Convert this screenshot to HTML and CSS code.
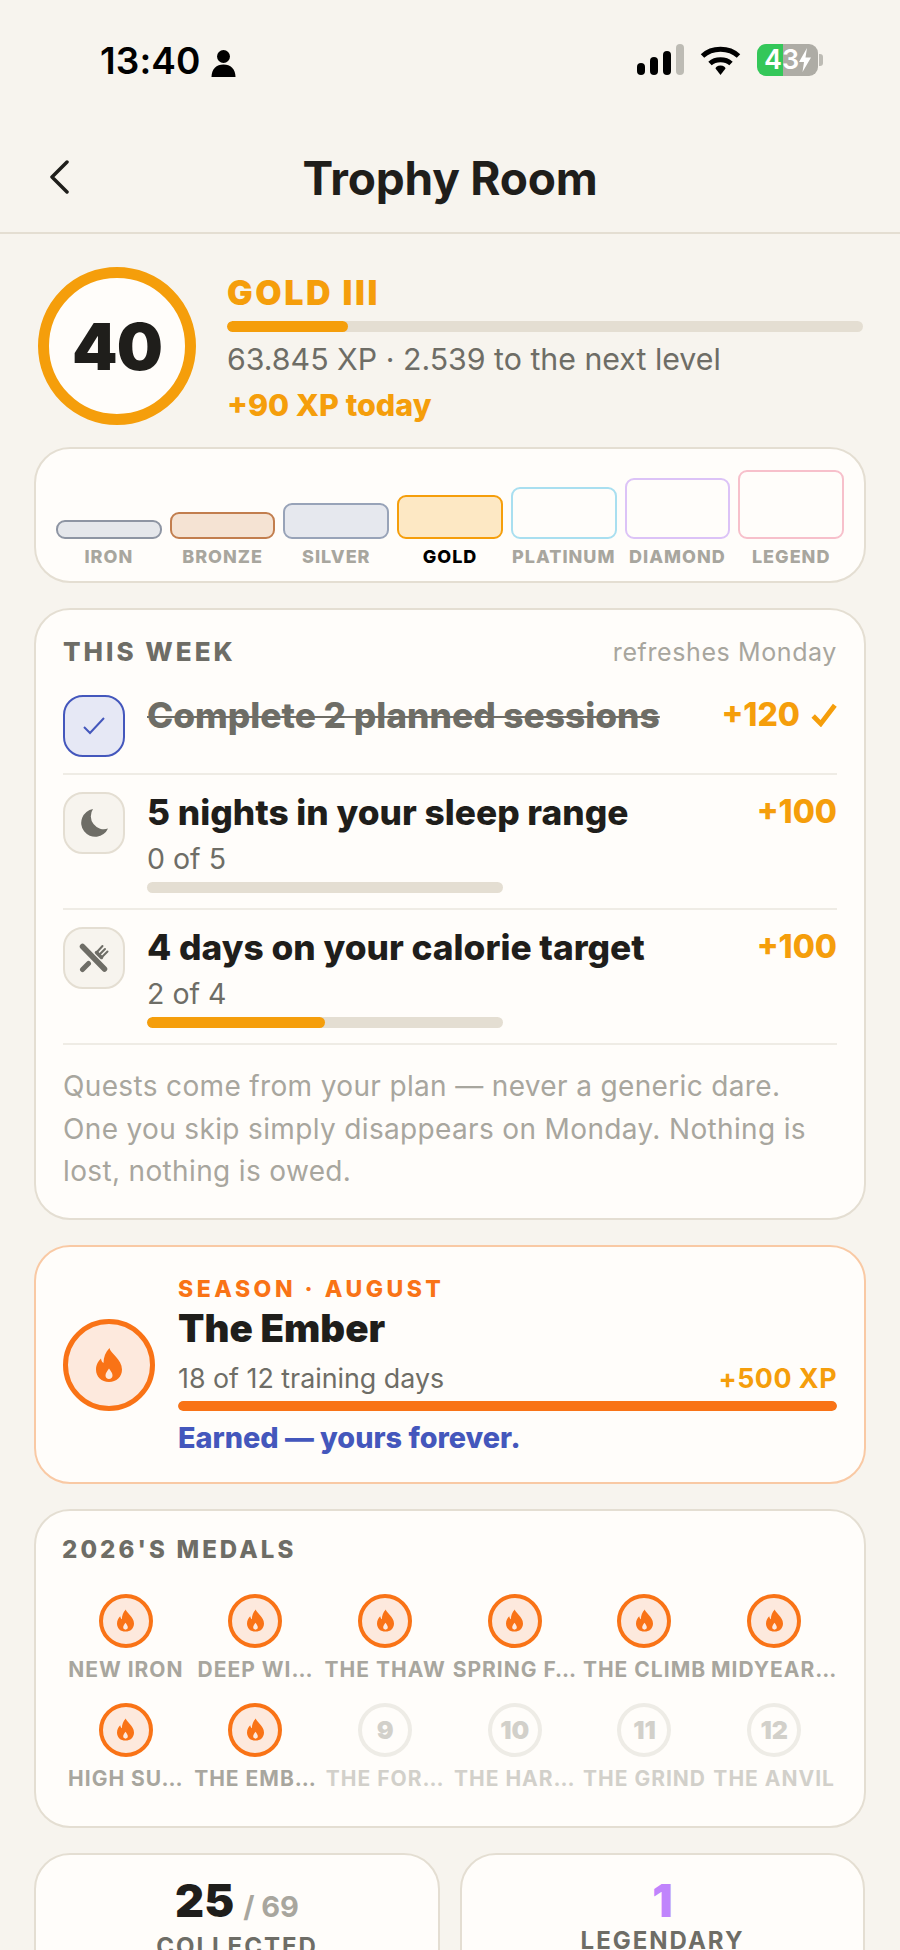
FILE: index.html
```html
<!DOCTYPE html>
<html lang="en">
<head>
    <meta charset="UTF-8">
    <meta name="viewport" content="width=device-width, initial-scale=1.0">
    <title>Trophy Room</title>
    <link rel="stylesheet" href="styles.css">
</head>
<body>
    <svg class="defs" width="0" height="0" aria-hidden="true">
        <symbol id="flame" viewBox="0 0 26 34">
            <path fill-rule="evenodd" d="M13.5 0C14 5 26 11 26 21.5C26 29 20.5 34 13 34C5.5 34 0 29 0 21.5C0 16.5 2.5 13 5 10.5C5.3 12.5 6 14 7.5 15C7.5 9 9.5 4 13.5 0ZM13 20.5C11 23.500 9.500 25 9.500 27.500C9.500 29.500 11 31 13 31C15 31 16.500 29.500 16.500 27.500C16.500 25 15 23.500 13 20.500Z"/>
        </symbol>
    </svg>

    <div class="phone">
        <div class="status">
            <div class="status-left">
                <span class="time">13:40</span>
                <svg class="person" viewBox="0 0 24 28" width="25" height="28"><circle cx="12" cy="7.500" r="6.500"/><path d="M0 28C0 20 5 15.500 12 15.500S24 20 24 28Z"/></svg>
            </div>
            <div class="status-right">
                <div class="signal">
                    <span class="sig sig-1"></span>
                    <span class="sig sig-2"></span>
                    <span class="sig sig-3"></span>
                    <span class="sig sig-4"></span>
                </div>
                <svg class="wifi" viewBox="0 0 41 31" width="41" height="31" fill="none" stroke="#000">
                    <path stroke-width="5" d="M2.500 12C12 3 29 3 38.500 12"/>
                    <path stroke-width="5" d="M10 19.500C15.500 14.500 25.500 14.500 31 19.500"/>
                    <path fill="#000" stroke="none" d="M20.500 21.500C23.500 21.500 25.500 23 25.500 24.500L20.500 31L15.500 24.500C15.500 23 17.500 21.500 20.500 21.500Z"/>
                </svg>
                <div class="battery">
                    <div class="battery-body">
                        <span class="battery-level">43</span>
                        <svg class="bolt" viewBox="0 0 12 24" width="12" height="24"><path fill="#fff" d="M8 0L0 14H5L3.500 24L12 9.500H6.500Z"/></svg>
                    </div>
                    <span class="battery-nub"></span>
                </div>
            </div>
        </div>

        <div class="nav">
            <svg class="back" viewBox="0 0 20 34" width="20" height="34" fill="none" stroke="#1f1e1b" stroke-width="3.500" stroke-linecap="round" stroke-linejoin="round"><path d="M18 2L3 17L18 32"/></svg>
            <h1>Trophy Room</h1>
        </div>

        <div class="content">
            <div class="level">
                <div class="level-ring">40</div>
                <div class="level-info">
                    <div class="level-rank">GOLD III</div>
                    <div class="bar level-bar"><div class="bar-fill" style="width: 19%"></div></div>
                    <div class="level-xp">63.845 XP · 2.539 to the next level</div>
                    <div class="level-today">+90 XP today</div>
                </div>
            </div>

            <div class="card tiers">
                <div class="tier">
                    <div class="tier-block tier-iron"></div>
                    <span class="tier-name">IRON</span>
                </div>
                <div class="tier">
                    <div class="tier-block tier-bronze"></div>
                    <span class="tier-name">BRONZE</span>
                </div>
                <div class="tier">
                    <div class="tier-block tier-silver"></div>
                    <span class="tier-name">SILVER</span>
                </div>
                <div class="tier">
                    <div class="tier-block tier-gold"></div>
                    <span class="tier-name current">GOLD</span>
                </div>
                <div class="tier">
                    <div class="tier-block tier-platinum"></div>
                    <span class="tier-name">PLATINUM</span>
                </div>
                <div class="tier">
                    <div class="tier-block tier-diamond"></div>
                    <span class="tier-name">DIAMOND</span>
                </div>
                <div class="tier">
                    <div class="tier-block tier-legend"></div>
                    <span class="tier-name">LEGEND</span>
                </div>
            </div>

            <div class="card quests">
                <div class="quests-head">
                    <span class="section-title">THIS WEEK</span>
                    <span class="quests-refresh">refreshes Monday</span>
                </div>

                <div class="quest">
                    <div class="quest-icon done">
                        <svg viewBox="0 0 22 18" width="22" height="18" fill="none" stroke="#4457bc" stroke-width="2"><path d="M1 10L7 16L21 1"/></svg>
                    </div>
                    <div class="quest-body">
                        <div class="quest-title struck">Complete 2 planned sessions</div>
                    </div>
                    <div class="quest-xp">+120
                        <svg viewBox="0 0 24 22" width="26" height="24" fill="none" stroke="#f59e0b" stroke-width="4.500"><path d="M2 12L9 19L22 2"/></svg>
                    </div>
                </div>

                <div class="quest">
                    <div class="quest-icon">
                        <svg viewBox="0 0 28 28" width="28" height="28"><path fill="#6e6d66" d="M13 0A14 14 0 1 0 28 19.500A13 13 0 0 1 13 0Z"/></svg>
                    </div>
                    <div class="quest-body">
                        <div class="quest-title">5 nights in your sleep range</div>
                        <div class="quest-sub">0 of 5</div>
                        <div class="bar quest-bar"><div class="bar-fill" style="width: 0%"></div></div>
                    </div>
                    <div class="quest-xp">+100</div>
                </div>

                <div class="quest">
                    <div class="quest-icon">
                        <svg viewBox="0 0 30 30" width="30" height="30" fill="none" stroke="#6e6d66" stroke-linecap="round">
                            <path stroke-width="5.500" d="M3.500 3.500L25.500 26"/>
                            <path stroke-width="5" d="M3.500 26.500L9.500 20.500"/>
                            <path stroke-width="2" d="M18 9L23.500 3M20.500 11.500L26 6M23 14L28.500 8.500"/>
                            <path stroke-width="3.500" d="M17.500 9.500L22.500 14.500"/>
                        </svg>
                    </div>
                    <div class="quest-body">
                        <div class="quest-title">4 days on your calorie target</div>
                        <div class="quest-sub">2 of 4</div>
                        <div class="bar quest-bar"><div class="bar-fill" style="width: 50%"></div></div>
                    </div>
                    <div class="quest-xp">+100</div>
                </div>

                <p class="quests-note">Quests come from your plan — never a generic dare. One you skip simply disappears on Monday. Nothing is lost, nothing is owed.</p>
            </div>

            <div class="card season">
                <div class="season-medal">
                    <svg width="26" height="34"><use href="#flame"/></svg>
                </div>
                <div class="season-info">
                    <div class="season-label">SEASON · AUGUST</div>
                    <div class="season-name">The Ember</div>
                    <div class="season-meta">
                        <span>18 of 12 training days</span>
                        <span class="season-xp">+500 XP</span>
                    </div>
                    <div class="bar season-bar"><div class="bar-fill" style="width: 100%"></div></div>
                    <div class="season-earned">Earned — yours forever.</div>
                </div>
            </div>

            <div class="card medals">
                <div class="section-title medals-title">2026'S MEDALS</div>
                <div class="medal-grid">
                    <div class="medal"><div class="medal-circle"><svg width="17" height="23"><use href="#flame"/></svg></div><span class="medal-name">NEW IRON</span></div>
                    <div class="medal"><div class="medal-circle"><svg width="17" height="23"><use href="#flame"/></svg></div><span class="medal-name">DEEP WI…</span></div>
                    <div class="medal"><div class="medal-circle"><svg width="17" height="23"><use href="#flame"/></svg></div><span class="medal-name">THE THAW</span></div>
                    <div class="medal"><div class="medal-circle"><svg width="17" height="23"><use href="#flame"/></svg></div><span class="medal-name">SPRING F…</span></div>
                    <div class="medal"><div class="medal-circle"><svg width="17" height="23"><use href="#flame"/></svg></div><span class="medal-name">THE CLIMB</span></div>
                    <div class="medal"><div class="medal-circle"><svg width="17" height="23"><use href="#flame"/></svg></div><span class="medal-name">MIDYEAR…</span></div>
                    <div class="medal"><div class="medal-circle"><svg width="17" height="23"><use href="#flame"/></svg></div><span class="medal-name">HIGH SU…</span></div>
                    <div class="medal"><div class="medal-circle"><svg width="17" height="23"><use href="#flame"/></svg></div><span class="medal-name">THE EMB…</span></div>
                    <div class="medal locked"><div class="medal-circle">9</div><span class="medal-name">THE FOR…</span></div>
                    <div class="medal locked"><div class="medal-circle">10</div><span class="medal-name">THE HAR…</span></div>
                    <div class="medal locked"><div class="medal-circle">11</div><span class="medal-name">THE GRIND</span></div>
                    <div class="medal locked"><div class="medal-circle">12</div><span class="medal-name">THE ANVIL</span></div>
                </div>
            </div>

            <div class="stats">
                <div class="card stat">
                    <div class="stat-value">25<span class="stat-total">/ 69</span></div>
                    <div class="stat-label">COLLECTED</div>
                </div>
                <div class="card stat">
                    <div class="stat-value legendary">1</div>
                    <div class="stat-label">LEGENDARY</div>
                </div>
            </div>
        </div>
    </div>
</body>
</html>
```

FILE: styles.css
```css
:root {
    --bg: #f7f4ee;
    --card: #fffdfa;
    --line: #e4ded2;
    --divider: #efece5;
    --ink: #1f1e1b;
    --muted: #6e6d66;
    --faint: #a8a69e;
    --amber: #f59e0b;
    --orange: #f97316;
    --indigo: #4457bc;
}

* {
    box-sizing: border-box;
}

html, body {
    margin: 0;
    height: 1950px;
    overflow: hidden;
}

body {
    font-family: 'Inter', sans-serif;
    background: var(--bg);
    color: var(--ink);
}

.defs {
    position: absolute;
}

.phone {
    height: 1950px;
    overflow: hidden;
}

/* status bar */
.status {
    display: flex;
    justify-content: space-between;
    height: 110px;
    padding: 44px 77px 0 100px;
}

.status-left {
    display: flex;
    align-items: center;
    gap: 10px;
    height: 32px;
    margin-top: 1px;
}

.time {
    font-size: 37px;
    font-weight: 600;
    line-height: 32px;
    letter-spacing: 0.1px;
    color: #000;
}

.person {
    margin-top: 3px;
}

.status-right {
    display: flex;
    align-items: flex-start;
    gap: 16px;
}

.signal {
    display: flex;
    align-items: flex-end;
    gap: 5px;
    height: 31px;
}

.sig {
    width: 8px;
    border-radius: 4px;
    background: #000;
}

.sig-1 { height: 12px; }
.sig-2 { height: 18px; }
.sig-3 { height: 24px; }
.sig-4 { height: 31px; background: #bdbbb4; }

.battery {
    display: flex;
    align-items: center;
    gap: 1px;
    height: 32px;
}

.battery-body {
    display: flex;
    align-items: center;
    justify-content: center;
    width: 61px;
    height: 32px;
    border-radius: 9px;
    background: linear-gradient(90deg, #34c759 43%, #aeaca5 43%);
}

.battery-level {
    font-size: 27px;
    font-weight: 600;
    line-height: 32px;
    color: #fff;
}

.battery-nub {
    width: 4px;
    height: 12px;
    border-radius: 0 3px 3px 0;
    background: #bdbbb4;
}

/* nav */
.nav {
    position: relative;
    height: 124px;
    padding-top: 41px;
    border-bottom: 2px solid var(--line);
}

.nav h1 {
    margin: 0;
    font-size: 46px;
    font-weight: 700;
    line-height: 54px;
    letter-spacing: -0.2px;
    text-align: center;
}

.back {
    position: absolute;
    left: 49px;
    top: 50px;
}

/* content */
.content {
    display: flex;
    flex-direction: column;
    gap: 25px;
    padding: 33px 34px 0;
}

.card {
    background: var(--card);
    border: 2px solid var(--line);
    border-radius: 36px;
}

.bar {
    height: 11px;
    border-radius: 6px;
    background: var(--line);
    overflow: hidden;
}

.bar-fill {
    height: 100%;
    border-radius: 6px;
    background: var(--amber);
}

/* level */
.level {
    display: flex;
    gap: 31px;
    padding: 0 3px 0 4px;
    margin-bottom: -3px;
}

.level-ring {
    display: flex;
    align-items: center;
    justify-content: center;
    flex: none;
    width: 158px;
    height: 158px;
    border: 11px solid var(--amber);
    border-radius: 50%;
    background: var(--card);
    font-size: 65px;
    font-weight: 900;
    letter-spacing: -1px;
}

.level-info {
    flex: 1;
    padding-top: 7px;
}

.level-rank {
    font-size: 34px;
    font-weight: 900;
    line-height: 38px;
    letter-spacing: 2.6px;
    color: var(--amber);
}

.level-bar {
    margin-top: 9px;
}

.level-xp {
    margin-top: 9px;
    font-size: 30.3px;
    line-height: 36px;
    color: var(--muted);
}

.level-today {
    margin-top: 11px;
    font-size: 30.5px;
    font-weight: 800;
    line-height: 34px;
    color: var(--amber);
}

/* tiers */
.tiers {
    display: flex;
    align-items: flex-end;
    gap: 8px;
    padding: 21px 20px 13px;
}

.tier {
    flex: 1;
    min-width: 0;
    text-align: center;
}

.tier-block {
    border: 2px solid;
    border-radius: 9px;
}

.tier-iron { height: 19px; border-color: #8e95a3; background: #e5e7eb; }
.tier-bronze { height: 27px; border-color: #c27e4e; background: #f5e3d3; }
.tier-silver { height: 36px; border-color: #98a3b8; background: #e6e8ee; }
.tier-gold { height: 44px; border-color: var(--amber); background: #fde8c4; }
.tier-platinum { height: 52px; border-color: #a9dff0; background: var(--card); }
.tier-diamond { height: 61px; border-color: #dcc3f7; background: var(--card); }
.tier-legend { height: 69px; border-color: #f7c0cb; background: var(--card); }

.tier-name {
    display: block;
    margin-top: 7px;
    font-size: 18px;
    font-weight: 800;
    line-height: 22px;
    letter-spacing: 1px;
    white-space: nowrap;
    color: var(--faint);
}

.tier-name.current {
    color: #000;
}

/* quests */
.section-title {
    font-size: 26px;
    font-weight: 800;
    line-height: 30px;
    letter-spacing: 3px;
    color: var(--muted);
}

.quests {
    padding: 27px 27px 25px;
}

.quests-head {
    display: flex;
    justify-content: space-between;
    margin-bottom: 11px;
}

.quests-refresh {
    font-size: 25px;
    line-height: 30px;
    letter-spacing: 0.6px;
    color: var(--faint);
}

.quest {
    display: flex;
    align-items: flex-start;
    gap: 22px;
    padding: 17px 0 15px;
    border-bottom: 2px solid var(--divider);
}

.quest-icon {
    display: flex;
    align-items: center;
    justify-content: center;
    flex: none;
    width: 62px;
    height: 62px;
    background: var(--bg);
    border: 2px solid var(--line);
    border-radius: 20px;
}

.quest-icon.done {
    margin-bottom: 1px;
    background: #e6e8f5;
    border-color: var(--indigo);
}

.quest-body {
    flex: 1;
    min-width: 0;
    padding-top: 1px;
}

.quest-title {
    font-size: 35.3px;
    font-weight: 800;
    line-height: 40px;
}

.quest-title.struck {
    color: var(--muted);
    text-decoration: line-through;
    text-decoration-thickness: 2px;
}

.quest-sub {
    margin-top: 9px;
    font-size: 28.5px;
    line-height: 34px;
    color: var(--muted);
}

.quest-bar {
    width: 356px;
    margin-top: 6px;
}

.quest-xp {
    display: flex;
    align-items: center;
    gap: 11px;
    padding-top: 2px;
    font-size: 32px;
    font-weight: 800;
    line-height: 36px;
    color: var(--amber);
}

.quests-note {
    margin: 20px 0 0;
    padding-right: 24px;
    font-size: 28px;
    line-height: 42.5px;
    letter-spacing: 0.35px;
    color: var(--faint);
}

/* season */
.season {
    display: flex;
    align-items: center;
    gap: 23px;
    padding: 28px 27px 27px;
    border-color: #f9c9a4;
}

.season-medal {
    display: flex;
    align-items: center;
    justify-content: center;
    flex: none;
    width: 92px;
    height: 92px;
    border: 5px solid var(--orange);
    border-radius: 50%;
    background: #fde9dd;
    fill: var(--orange);
}

.season-info {
    flex: 1;
    min-width: 0;
}

.season-label {
    font-size: 23px;
    font-weight: 800;
    line-height: 28px;
    letter-spacing: 3.5px;
    color: var(--orange);
}

.season-name {
    margin-top: 3px;
    font-size: 38.5px;
    font-weight: 900;
    line-height: 44px;
}

.season-meta {
    display: flex;
    justify-content: space-between;
    margin-top: 12px;
    font-size: 26.8px;
    line-height: 32px;
    color: var(--muted);
}

.season-xp {
    font-weight: 700;
    letter-spacing: 0.5px;
    color: var(--amber);
}

.season-bar {
    height: 10px;
    margin-top: 7px;
}

.season-bar .bar-fill {
    background: var(--orange);
}

.season-earned {
    margin-top: 10px;
    font-size: 28.8px;
    font-weight: 800;
    line-height: 34px;
    color: var(--indigo);
}

/* medals */
.medals {
    padding: 25px 27px 35px;
}

.medals-title {
    display: block;
    margin-left: -1px;
    font-size: 24px;
    line-height: 28px;
    letter-spacing: 3.1px;
}

.medal-grid {
    display: grid;
    grid-template-columns: repeat(6, 1fr);
    gap: 21px 4px;
    margin-top: 30px;
}

.medal {
    min-width: 0;
    text-align: center;
}

.medal-circle {
    display: flex;
    align-items: center;
    justify-content: center;
    width: 54px;
    height: 54px;
    margin: 0 auto;
    border: 4px solid var(--orange);
    border-radius: 50%;
    background: #fde9dd;
    fill: var(--orange);
}

.medal-name {
    display: block;
    margin-top: 10px;
    margin-inline: -6px;
    font-size: 21px;
    font-weight: 700;
    line-height: 24px;
    letter-spacing: 1px;
    white-space: nowrap;
    color: var(--faint);
}

.locked .medal-circle {
    border-color: #eeece6;
    background: var(--card);
    font-size: 25px;
    font-weight: 900;
    color: #d2d0ca;
}

.locked .medal-name {
    color: #d2d0ca;
}

/* stats */
.stats {
    display: grid;
    grid-template-columns: 406px 405px;
    gap: 20px;
}

.stat {
    padding: 20px 0 0;
    height: 140px;
    text-align: center;
}

.stat-value {
    font-size: 45px;
    font-weight: 900;
    line-height: 52px;
}

.stat-total {
    margin-left: 9px;
    font-size: 29px;
    font-weight: 700;
    color: var(--faint);
}

.stat-value.legendary {
    color: #c084fc;
}

.stat-label {
    font-size: 24px;
    font-weight: 700;
    line-height: 28px;
    letter-spacing: 2px;
    color: var(--muted);
}
```
